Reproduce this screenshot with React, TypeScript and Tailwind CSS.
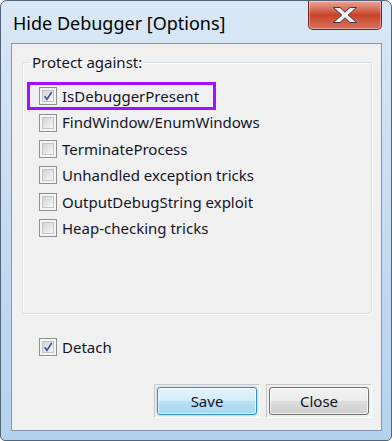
import React from "react";

const opts = [
  { label: "IsDebuggerPresent", checked: true },
  { label: "FindWindow/EnumWindows", checked: false },
  { label: "TerminateProcess", checked: false },
  { label: "Unhandled exception tricks", checked: false },
  { label: "OutputDebugString exploit", checked: false },
  { label: "Heap-checking tricks", checked: false },
];

function Box({ checked }: { checked?: boolean }) {
  return (
    <span className="flex h-[18px] w-[18px] shrink-0 border border-[#8e8f8f] bg-[#f4f4f4] p-[2px]">
      <span className="flex h-full w-full items-center justify-center border border-[#c4c4c4] bg-gradient-to-br from-[#d0d2d6] to-[#f8f8f8]">
        {checked && (
          <svg width="12" height="12" viewBox="0 0 12 12">
            <path d="M2 6.2 L4.8 10 L10.4 1.2" fill="none" stroke="#3d51a8" strokeWidth="2" />
          </svg>
        )}
      </span>
    </span>
  );
}

function Row({ label, checked }: { label: string; checked?: boolean }) {
  return (
    <div className="flex h-[26.4px] items-center">
      <Box checked={checked} />
      <span className="ml-[5px] whitespace-nowrap">{label}</span>
    </div>
  );
}

export default function App() {
  return (
    <div className="h-[441px] w-[392px] bg-white font-['Noto_Sans',sans-serif] text-[15px] text-[#141428]">
      <div className="flex h-full w-full flex-col rounded-t-[7px] rounded-b-[5px] border border-[#52657a] bg-gradient-to-b from-[#d9e8f6] via-[#c6dcf1] to-[#b4d2ee] pb-[9px] pl-[10px] pr-[9px]">
        {/* title bar */}
        <div className="flex h-[42px] shrink-0 items-start">
          <span className="mt-[10px] ml-[2px] text-[18px] leading-[24px] text-black">Hide Debugger [Options]</span>
          <div className="ml-auto flex h-[29px] w-[74px] items-center justify-center rounded-b-[5px] border border-t-0 border-[#6b2a20] bg-gradient-to-b from-[#e9a597] via-[#c8432b] to-[#d8735a] shadow-[inset_0_0_0_1px_rgba(255,255,255,0.35)]">
            <svg width="24" height="16" viewBox="0 0 24 16">
              <path
                d="M0.5 0.5 H7 L12 5.2 L17 0.5 H23.5 L15.2 8 L23.5 15.5 H17 L12 10.8 L7 15.5 H0.5 L8.8 8 Z"
                fill="#f4f4f4"
                stroke="#3b3b4b"
                strokeWidth="1"
              />
            </svg>
          </div>
        </div>

        {/* client area */}
        <div className="flex flex-1 flex-col border border-[#8296ad] bg-[#f0f0f0] pl-[10px] pr-[9px] pt-[8px]">
          <fieldset className="h-[262px] rounded-[3px] border border-[#d5dfe5] shadow-[1px_1px_0_white,inset_1px_1px_0_white]">
            <legend className="ml-[7px] px-[2px] leading-[20px]">Protect against:</legend>
            <div className="pl-[16px] pt-[11px]">
              {opts.map((o, i) => (
                <div key={o.label} className="relative">
                  {i === 0 && (
                    <span className="absolute left-[-12px] top-[-1px] h-[28px] w-[189px] border-[3px] border-[#a30fff]" />
                  )}
                  <Row label={o.label} checked={o.checked} />
                </div>
              ))}
            </div>
          </fieldset>

          <div className="mt-[20px] pl-[17px]">
            <Row label="Detach" checked />
          </div>

          <div className="mt-[24px] flex justify-end gap-[6px]">
            <div className="flex h-[34px] w-[106px] border border-[#c8c8c8] border-b-white border-r-white p-[2px]">
              <button className="flex-1 rounded-[3px] border border-[#2f8fd6] bg-[linear-gradient(#e3f3fc_0%,#d4ecfa_50%,#b9e0f6_51%,#a9d8f3_100%)] leading-[25px] shadow-[inset_0_0_0_1px_rgba(255,255,255,0.7),0_0_2px_#5ec2f0]">
                Save
              </button>
            </div>
            <div className="flex h-[34px] w-[106px] border border-[#c8c8c8] border-b-white border-r-white p-[2px]">
              <button className="flex-1 rounded-[3px] border border-[#707070] bg-[linear-gradient(#f2f2f2_0%,#ebebeb_50%,#dddddd_51%,#cfcfcf_100%)] leading-[25px] shadow-[inset_0_0_0_1px_rgba(255,255,255,0.7)]">
                Close
              </button>
            </div>
          </div>
        </div>
      </div>
    </div>
  );
}
